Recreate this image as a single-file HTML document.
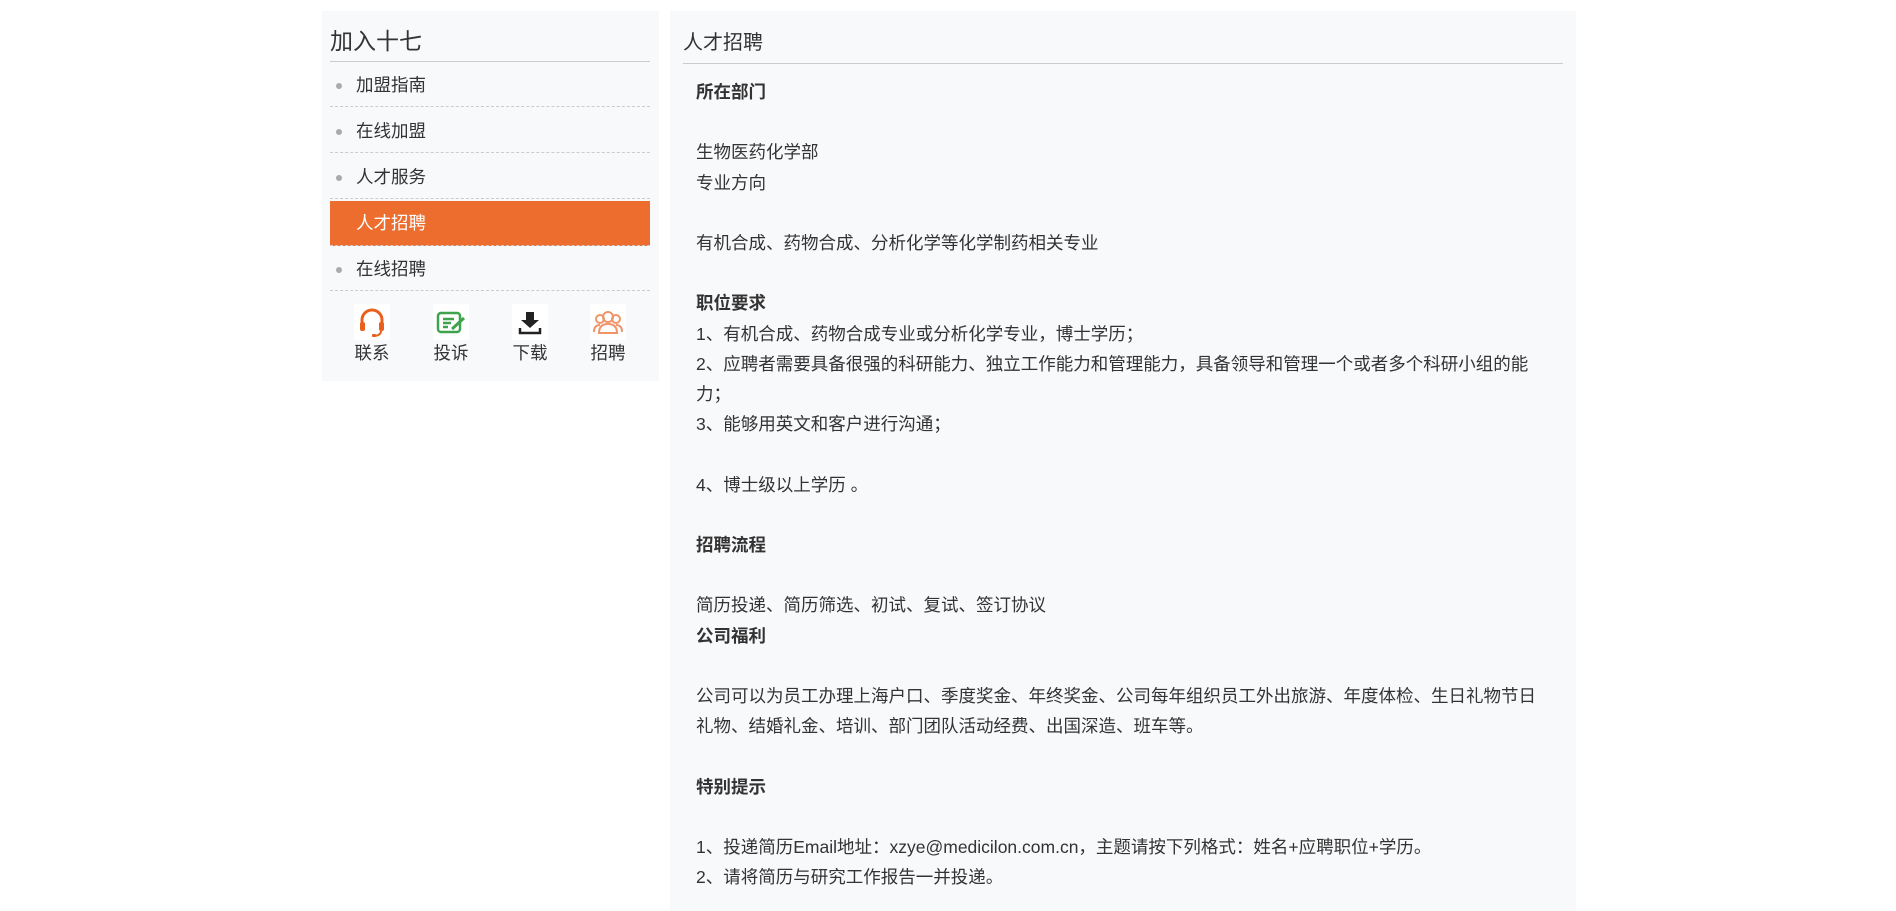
<!DOCTYPE html>
<html><head><meta charset="utf-8"><style>
body{margin:0;width:1896px;height:891px;overflow:hidden;background:#fff;font-family:"Liberation Sans","Noto Sans CJK SC",sans-serif;color:#333}
.l{position:absolute;left:322px;top:11px;width:337px;height:370px;background:#f8f9fb}
.t{position:absolute;left:8px;top:15px;font-size:23px;color:#333;line-height:30px}
.hl{position:absolute;left:8px;width:320px;top:50px;border-top:1px solid #ccc}
.it{position:absolute;left:8px;width:320px;height:45px;border-bottom:1px dashed #ccc;font-size:17.5px;line-height:49px}
.it span{position:absolute;left:26px}
.it i{position:absolute;left:6px;top:22px;width:6px;height:6px;border-radius:3px;background:#aaa}
.it.on{background:#ec6d2e;color:#fff;line-height:45px}
.ic{position:absolute;top:293px;width:36px;text-align:center}
.ic .b{width:36px;height:36px;background:#fff}
.ic div.n{font-size:17.5px;width:60px;margin-left:-12px;margin-top:0px}
.r{position:absolute;left:670px;top:11px;width:906px;height:900px;background:#f8f9fb}
.rt{position:absolute;left:13px;top:17px;font-size:20px;line-height:30px}
.rl{position:absolute;left:13px;width:880px;top:52px;border-top:1px solid #ccc}
.c{position:absolute;left:26px;top:66px;font-size:17.5px;line-height:30.2px;white-space:nowrap;color:#333}
b{font-weight:bold}
</style></head><body>
<div class="l">
<div class="t">加入十七</div><div class="hl"></div>
<div class="it" style="top:50px"><i></i><span>加盟指南</span></div>
<div class="it" style="top:96px"><i></i><span>在线加盟</span></div>
<div class="it" style="top:142px"><i></i><span>人才服务</span></div>
<div class="it on" style="top:190px;height:44px"><span>人才招聘</span></div>
<div class="it" style="top:234px"><i></i><span>在线招聘</span></div>
<div class="ic" style="left:32px"><div class="b"><svg width="36" height="36"><path d="M8 22v-6a10 10 0 0 1 20 0v6" fill="none" stroke="#e8601c" stroke-width="3"/><rect x="6" y="18" width="5" height="9" rx="2" fill="#e8601c"/><rect x="25" y="18" width="5" height="9" rx="2" fill="#e8601c"/><path d="M27 27q0 4-6 5" fill="none" stroke="#e8601c" stroke-width="2"/><rect x="18" y="30" width="4" height="3" rx="1" fill="#e8601c"/></svg></div><div class="n">联系</div></div>
<div class="ic" style="left:111px"><div class="b"><svg width="36" height="36"><rect x="5" y="9" width="22" height="19" rx="3" fill="none" stroke="#3fa34d" stroke-width="2.5"/><path d="M10 15h11M10 19h8M10 23h5" stroke="#3fa34d" stroke-width="2.5"/><path d="M19 25l12-11" stroke="#3fa34d" stroke-width="3"/></svg></div><div class="n">投诉</div></div>
<div class="ic" style="left:190px"><div class="b"><svg width="36" height="36"><path d="M14 8h8v8h5l-9 8-9-8h5z" fill="#222"/><path d="M8 24v5h20v-5" fill="none" stroke="#222" stroke-width="2.5"/></svg></div><div class="n">下载</div></div>
<div class="ic" style="left:268px"><div class="b"><svg width="36" height="36" fill="none" stroke="#f0956a" stroke-width="2"><circle cx="18" cy="13" r="5"/><path d="M9 29q0-9 9-9t9 9z"/><circle cx="10" cy="15" r="4"/><circle cx="26" cy="15" r="4"/><path d="M4 28q0-7 6-7M32 28q0-7-6-7"/></svg></div><div class="n">招聘</div></div>
</div>
<div class="r">
<div class="rt">人才招聘</div><div class="rl"></div>
<div class="c"><b>所在部门</b><br><br>生物医药化学部<br>专业方向<br><br>有机合成、药物合成、分析化学等化学制药相关专业<br><br><b>职位要求</b><br>1、有机合成、药物合成专业或分析化学专业，博士学历；<br>2、应聘者需要具备很强的科研能力、独立工作能力和管理能力，具备领导和管理一个或者多个科研小组的能<br>力；<br>3、能够用英文和客户进行沟通；<br><br>4、博士级以上学历 。<br><br><b>招聘流程</b><br><br>简历投递、简历筛选、初试、复试、签订协议<br><b>公司福利</b><br><br>公司可以为员工办理上海户口、季度奖金、年终奖金、公司每年组织员工外出旅游、年度体检、生日礼物节日<br>礼物、结婚礼金、培训、部门团队活动经费、出国深造、班车等。<br><br><b>特别提示</b><br><br>1、投递简历Email地址：xzye@medicilon.com.cn，主题请按下列格式：姓名+应聘职位+学历。<br>2、请将简历与研究工作报告一并投递。</div>
</div>
</body></html>
